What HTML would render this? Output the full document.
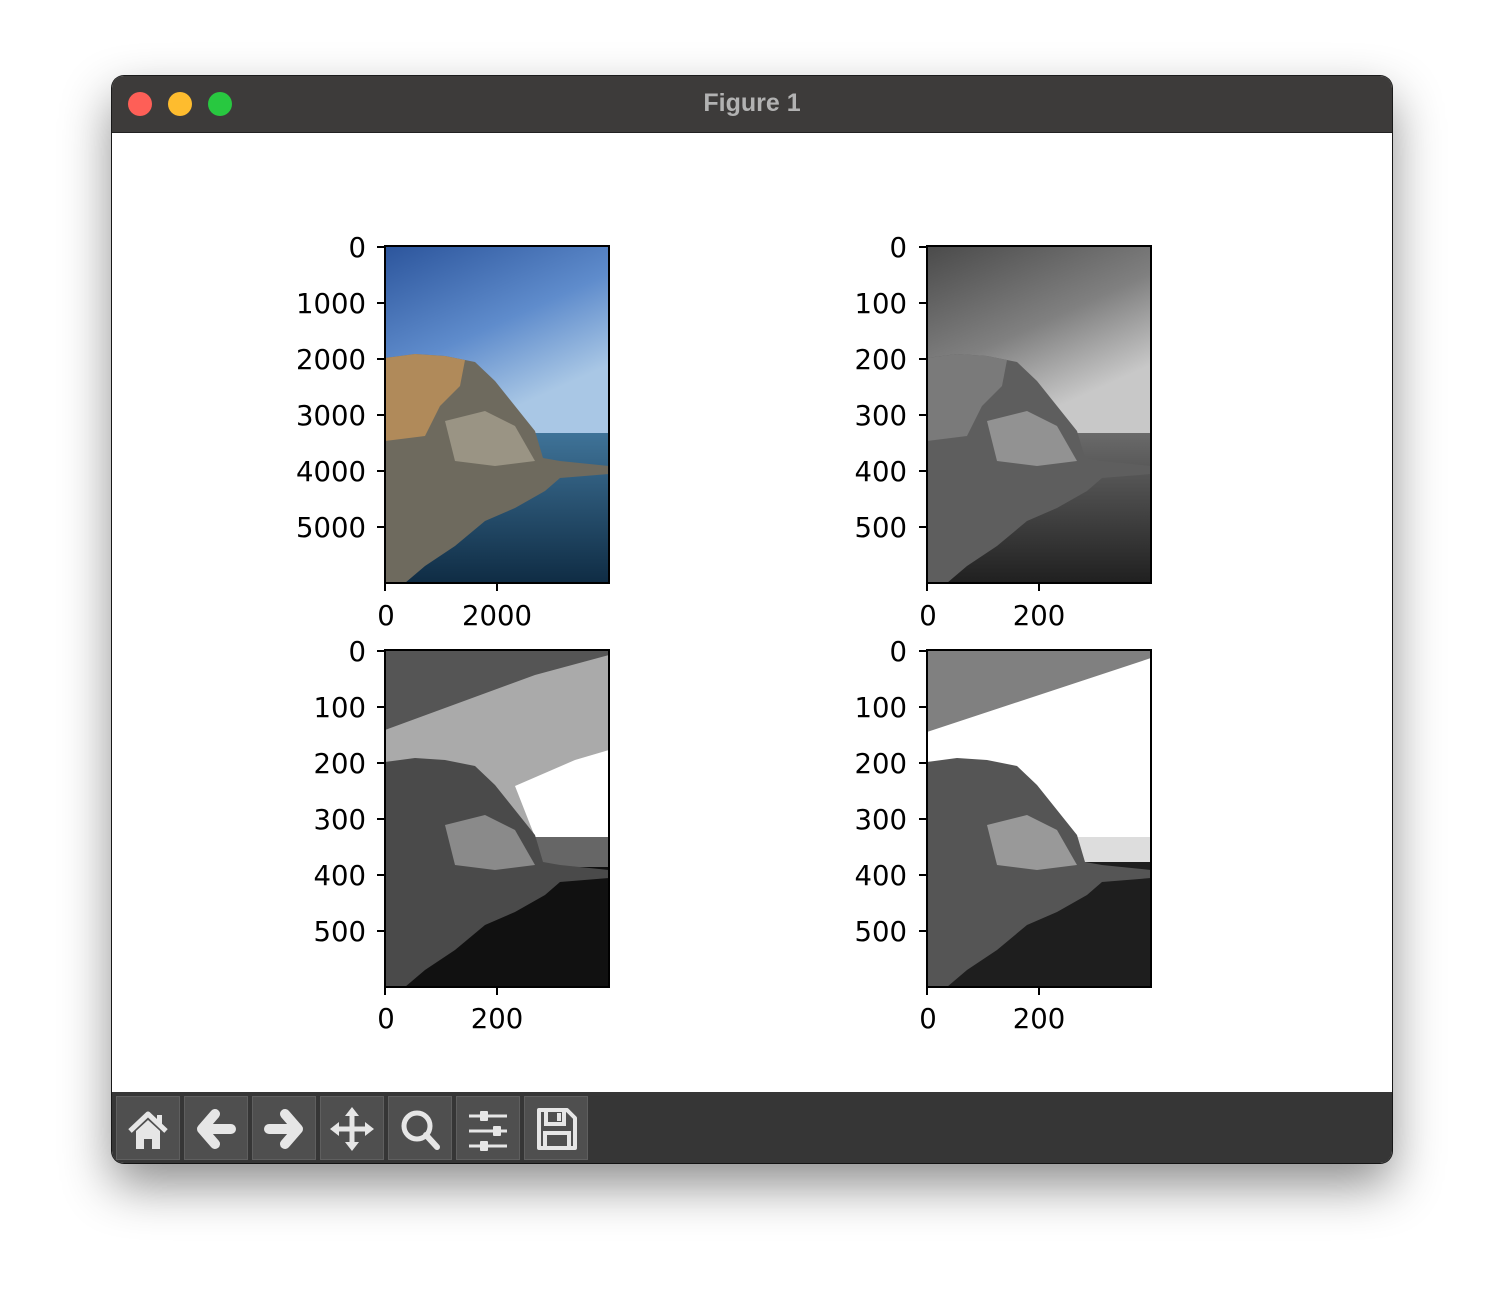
<!DOCTYPE html>
<html><head><meta charset="utf-8"><style>
html,body{margin:0;padding:0;background:#fff;width:1504px;height:1312px;overflow:hidden}
.win{position:absolute;left:112px;top:76px;width:1280px;height:1087px;border-radius:12px;overflow:hidden;box-shadow:0 22px 50px rgba(0,0,0,.45),0 0 0 1px #1e1e1e;background:#fff}
.title{position:absolute;left:0;top:0;width:1280px;height:56px;background:#3d3b3a;border-bottom:1px solid #222}
.title span{position:absolute;left:0;width:100%;top:13px;text-align:center;color:#b2b2b2;font:bold 25px "Liberation Sans",sans-serif}
.dot{position:absolute;top:16px;width:24px;height:24px;border-radius:50%}
.tb{position:absolute;left:0;top:1016px;width:1280px;height:71px;background:#363636}
.btn{position:absolute;top:4px;width:62px;height:62px;background:#4f4f4f;border:1px solid #5f5f5f}
.btn svg{position:absolute;left:0;top:0}
</style></head><body>
<div class="win">
<div class="title"><div class="dot" style="left:16px;background:#fe5f57"></div><div class="dot" style="left:56px;background:#febc2e"></div><div class="dot" style="left:96px;background:#28c840"></div><span>Figure 1</span></div>
<svg style="position:absolute;left:0;top:57px" width="1280" height="959" viewBox="112 133 1280 959" font-family="DejaVu Sans, sans-serif" font-size="27.5">
<defs>
<linearGradient id="sky" x1="0" y1="0" x2="0.3" y2="1"><stop offset="0" stop-color="#2c559c"/><stop offset="0.35" stop-color="#5f8ccc"/><stop offset="0.6" stop-color="#a9c7e5"/></linearGradient>
<linearGradient id="sea" x1="0" y1="0" x2="0" y2="1"><stop offset="0" stop-color="#3f7398"/><stop offset="1" stop-color="#0f2c44"/></linearGradient>
<linearGradient id="gsky" x1="0" y1="0" x2="0.3" y2="1"><stop offset="0" stop-color="#4a4a4a"/><stop offset="0.35" stop-color="#808080"/><stop offset="0.6" stop-color="#c8c8c8"/></linearGradient>
<linearGradient id="gsea" x1="0" y1="0" x2="0" y2="1"><stop offset="0" stop-color="#6a6a6a"/><stop offset="1" stop-color="#202020"/></linearGradient>
</defs>
<g transform="translate(385,246)">
<rect width="224" height="337" fill="url(#sky)"/>
<rect y="187" width="224" height="150" fill="url(#sea)"/>
<path d="M0,112 L30,108 L60,110 L90,116 L110,135 L130,160 L150,185 L158,212 L175,215 L224,220 L224,228 L175,232 L160,245 L130,262 L100,275 L70,300 L40,320 L20,337 L0,337Z" fill="#6e6a5e"/>
<path d="M0,112 L30,108 L60,110 L80,114 L75,140 L55,160 L40,190 L0,195Z" fill="#b08a5a"/>
<path d="M60,175 L100,165 L130,180 L150,215 L110,220 L70,215Z" fill="#9a9484"/>
</g>
<g transform="translate(927,246)">
<rect width="224" height="337" fill="url(#gsky)"/>
<rect y="187" width="224" height="150" fill="url(#gsea)"/>
<path d="M0,112 L30,108 L60,110 L90,116 L110,135 L130,160 L150,185 L158,212 L175,215 L224,220 L224,228 L175,232 L160,245 L130,262 L100,275 L70,300 L40,320 L20,337 L0,337Z" fill="#5e5e5e"/>
<path d="M0,112 L30,108 L60,110 L80,114 L75,140 L55,160 L40,190 L0,195Z" fill="#7a7a7a"/>
<path d="M60,175 L100,165 L130,180 L150,215 L110,220 L70,215Z" fill="#929292"/>
</g>
<g transform="translate(385,650)">
<rect width="224" height="337" fill="#aaaaaa"/>
<path d="M0,0 L224,0 L224,5 L150,25 L0,80Z" fill="#555"/>
<path d="M130,136 L190,110 L224,100 L224,187 L150,187Z" fill="#fff"/>
<rect y="187" width="224" height="150" fill="#111"/>
<rect x="140" y="187" width="84" height="30" fill="#666"/>
<path d="M0,112 L30,108 L60,110 L90,116 L110,135 L130,160 L150,185 L158,212 L175,215 L224,220 L224,228 L175,232 L160,245 L130,262 L100,275 L70,300 L40,320 L20,337 L0,337Z" fill="#4a4a4a"/>
<path d="M60,175 L100,165 L130,180 L150,215 L110,220 L70,215Z" fill="#8a8a8a"/>
</g>
<g transform="translate(927,650)">
<rect width="224" height="337" fill="#fff"/>
<path d="M0,0 L224,0 L224,8 L0,82Z" fill="#808080"/>
<rect y="187" width="224" height="150" fill="#1e1e1e"/>
<rect x="140" y="187" width="84" height="25" fill="#ddd"/>
<path d="M0,112 L30,108 L60,110 L90,116 L110,135 L130,160 L150,185 L158,212 L175,215 L224,220 L224,228 L175,232 L160,245 L130,262 L100,275 L70,300 L40,320 L20,337 L0,337Z" fill="#555"/>
<path d="M60,175 L100,165 L130,180 L150,215 L110,220 L70,215Z" fill="#999"/>
</g>
<g fill="none" stroke="#000" stroke-width="2">
<rect x="385" y="246" width="224" height="337"/><rect x="927" y="246" width="224" height="337"/>
<rect x="385" y="650" width="224" height="337"/><rect x="927" y="650" width="224" height="337"/>
<path d="M385,247h-8M385,303h-8M385,359h-8M385,415h-8M385,471h-8M385,527h-8M385,583v8M497,583v8
M927,247h-8M927,303h-8M927,359h-8M927,415h-8M927,471h-8M927,527h-8M927,583v8M1039,583v8
M385,651h-8M385,707h-8M385,763h-8M385,819h-8M385,875h-8M385,931h-8M385,987v8M497,987v8
M927,651h-8M927,707h-8M927,763h-8M927,819h-8M927,875h-8M927,931h-8M927,987v8M1039,987v8"/>
</g>
<g text-anchor="end" fill="#000">
<text x="366" y="257">0</text><text x="366" y="313">1000</text><text x="366" y="369">2000</text><text x="366" y="425">3000</text><text x="366" y="481">4000</text><text x="366" y="537">5000</text>
<text x="907" y="257">0</text><text x="907" y="313">100</text><text x="907" y="369">200</text><text x="907" y="425">300</text><text x="907" y="481">400</text><text x="907" y="537">500</text>
<text x="366" y="661">0</text><text x="366" y="717">100</text><text x="366" y="773">200</text><text x="366" y="829">300</text><text x="366" y="885">400</text><text x="366" y="941">500</text>
<text x="907" y="661">0</text><text x="907" y="717">100</text><text x="907" y="773">200</text><text x="907" y="829">300</text><text x="907" y="885">400</text><text x="907" y="941">500</text>
</g>
<g text-anchor="middle" fill="#000">
<text x="386" y="625">0</text><text x="497" y="625">2000</text><text x="928" y="625">0</text><text x="1039" y="625">200</text>
<text x="386" y="1028">0</text><text x="497" y="1028">200</text><text x="928" y="1028">0</text><text x="1039" y="1028">200</text>
</g>
</svg>
<div class="tb">
<div class="btn" style="left:4px"><svg width="62" height="62"><path d="M13,34 L31,17 L49,34" fill="none" stroke="#e6e6e6" stroke-width="5" stroke-linejoin="round"/><path d="M19,34 L31,23 L43,34 V52 H35 V42 H27 V52 H19Z" fill="#e6e6e6"/><rect x="40" y="18" width="5" height="10" fill="#e6e6e6"/></svg></div>
<div class="btn" style="left:72px"><svg width="62" height="62"><path d="M30,17 L17,32 L30,47 M18,32 H46" fill="none" stroke="#e6e6e6" stroke-width="10" stroke-linecap="round" stroke-linejoin="round"/></svg></div>
<div class="btn" style="left:140px"><svg width="62" height="62"><path d="M32,17 L45,32 L32,47 M44,32 H16" fill="none" stroke="#e6e6e6" stroke-width="10" stroke-linecap="round" stroke-linejoin="round"/></svg></div>
<div class="btn" style="left:208px"><svg width="62" height="62"><path d="M31,14 V50 M13,32 H49" stroke="#e6e6e6" stroke-width="5"/><path d="M31,10 L24,19 H38Z M31,54 L24,45 H38Z M9,32 L18,25 V39Z M53,32 L44,25 V39Z" fill="#e6e6e6"/></svg></div>
<div class="btn" style="left:276px"><svg width="62" height="62"><circle cx="28" cy="29" r="13" fill="none" stroke="#e6e6e6" stroke-width="5"/><path d="M37,38 L48,50" stroke="#e6e6e6" stroke-width="6" stroke-linecap="round"/></svg></div>
<div class="btn" style="left:344px"><svg width="62" height="62"><path d="M12,19 H50 M12,34 H50 M12,49 H50" stroke="#e6e6e6" stroke-width="3"/><rect x="23" y="14" width="8" height="10" rx="1" fill="#e6e6e6"/><rect x="36" y="29" width="8" height="10" rx="1" fill="#e6e6e6"/><rect x="23" y="44" width="8" height="10" rx="1" fill="#e6e6e6"/></svg></div>
<div class="btn" style="left:412px"><svg width="62" height="62"><path d="M14,13 H42 L50,21 V51 H14Z" fill="none" stroke="#e6e6e6" stroke-width="4" stroke-linejoin="round"/><rect x="21" y="13" width="18" height="14" fill="none" stroke="#e6e6e6" stroke-width="4"/><rect x="32" y="16" width="4" height="8" fill="#e6e6e6"/><rect x="20" y="36" width="24" height="15" fill="none" stroke="#e6e6e6" stroke-width="4"/></svg></div>
</div>
</div>
</body></html>
